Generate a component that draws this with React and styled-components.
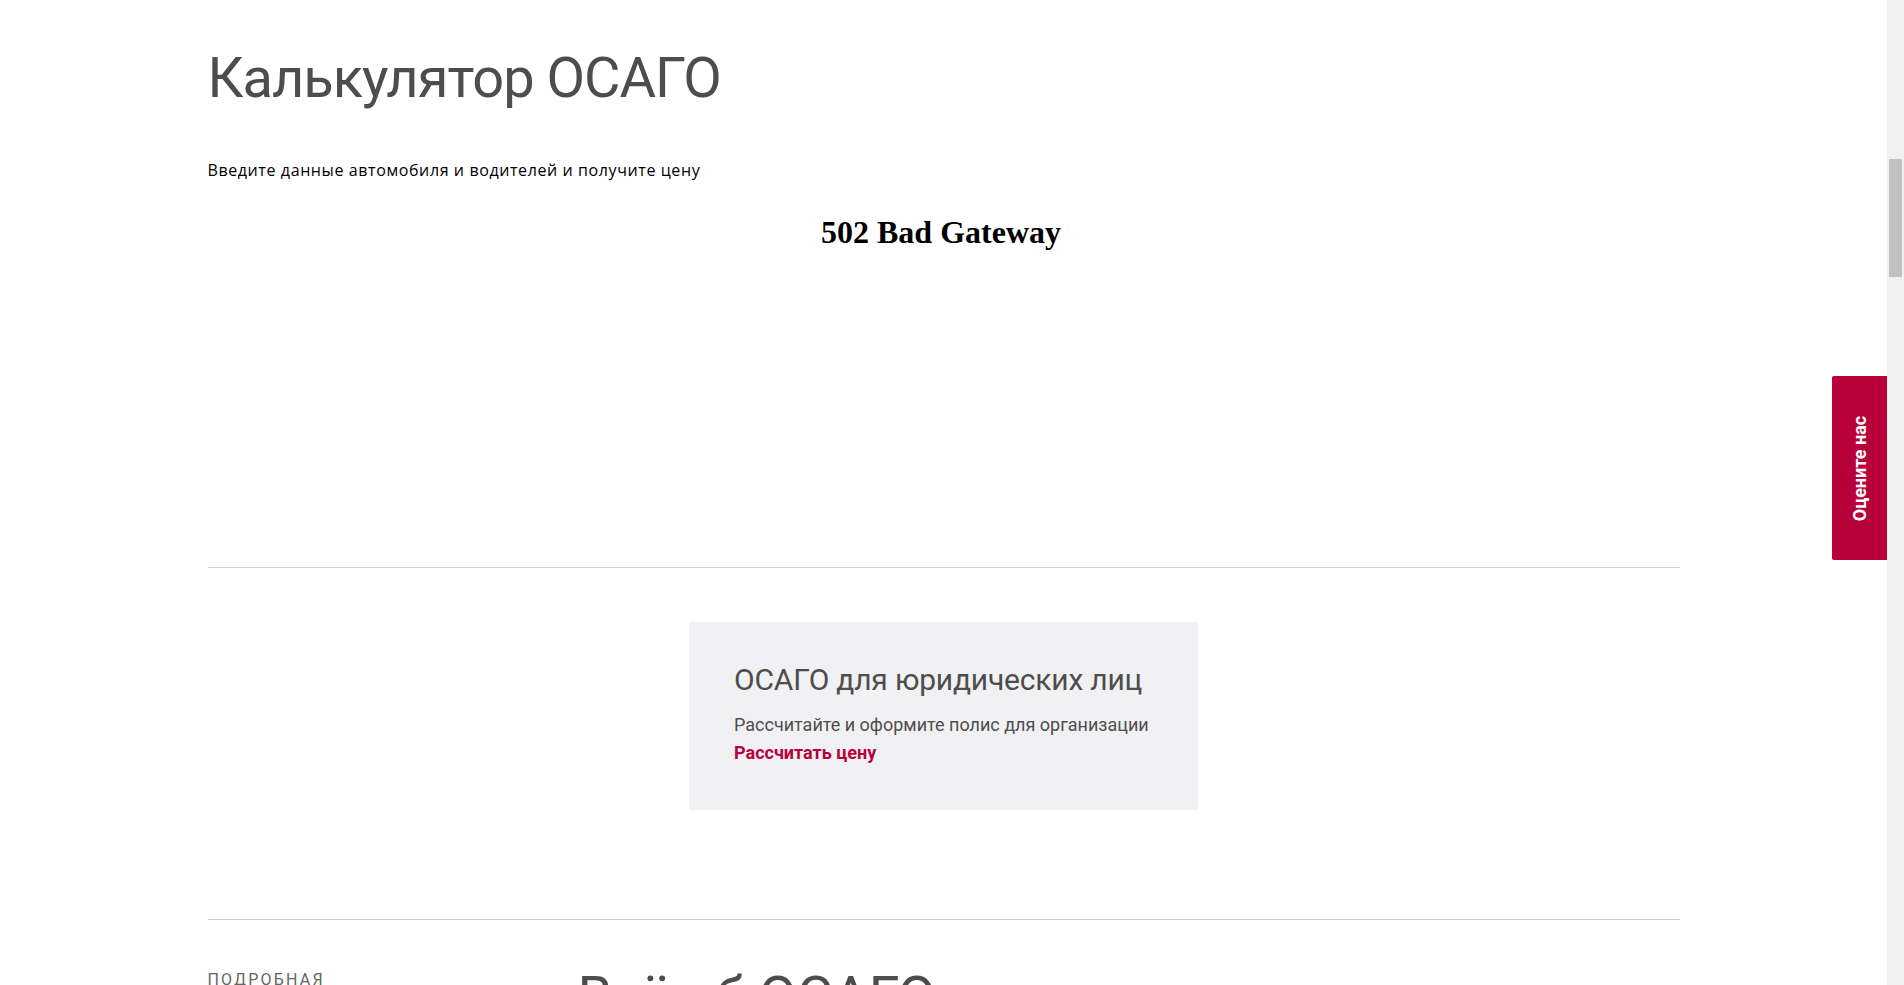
import React from 'react';
import styled, { createGlobalStyle } from 'styled-components';

const GlobalStyle = createGlobalStyle`
    html, body {
        margin: 0;
        padding: 0;
        overflow: hidden;
        background: #ffffff;
    }
`;

const StyledPage = styled.div`
    display: flex;
    flex-direction: row;
    height: 985px;
    overflow: hidden;
`;

const StyledMain = styled.div`
    position: relative;
    flex: 1;
    overflow: hidden;
`;

const StyledContainer = styled.div`
    width: 1472px;
    margin: 0 auto;
    padding-top: 46px;
`;

const StyledTitle = styled.h1`
    margin: 0;
    font-family: Roboto, "Liberation Sans", sans-serif;
    font-size: 56px;
    font-weight: 400;
    line-height: 64px;
    letter-spacing: -1px;
    color: #4d4d4d;
`;

const StyledLead = styled.p`
    margin: 50px 0 0;
    font-family: "Open Sans", "Noto Sans", sans-serif;
    font-size: 16px;
    line-height: 20px;
    letter-spacing: 0.6px;
    color: #000000;
`;

const StyledFrame = styled.div`
    height: 374px;
    padding: 8px 5px 0 0;
    margin-top: 5px;
`;

const StyledError = styled.h2`
    margin: 21px 0 0;
    text-align: center;
    font-family: "Liberation Serif", "Times New Roman", serif;
    font-size: 32px;
    font-weight: 700;
    color: #000000;
`;

const StyledDivide = styled.div`
    border-bottom: 1px solid ${p => p.$tone};
`;

const StyledCardRow = styled.div`
    display: flex;
    justify-content: center;
    padding: 54px 0 109px;
`;

const StyledCard = styled.div`
    width: 509px;
    height: 188px;
    box-sizing: border-box;
    padding: 40px 0 0 45px;
    background: #f1f1f3;
`;

const StyledCardTitle = styled.div`
    font-family: Roboto, "Liberation Sans", sans-serif;
    font-size: 30px;
    line-height: 36px;
    letter-spacing: -0.2px;
    color: #4d4d4d;
`;

const StyledCardText = styled.div`
    margin-top: 13px;
    font-family: Roboto, "Liberation Sans", sans-serif;
    font-size: 18px;
    line-height: 28px;
    color: #4d4d4d;
`;

const StyledCardLink = styled.a`
    display: block;
    font-family: Roboto, "Liberation Sans", sans-serif;
    font-size: 18px;
    font-weight: 700;
    line-height: 28px;
    color: #b8003a;
    text-decoration: none;
`;

const StyledMore = styled.div`
    display: flex;
    flex-direction: row;
    align-items: flex-start;
    padding-top: 45px;
`;

const StyledKicker = styled.div`
    width: 370px;
    margin-top: 6px;
    font-family: Roboto, "Liberation Sans", sans-serif;
    font-size: 16px;
    line-height: 18px;
    letter-spacing: 2.2px;
    color: #666666;
    text-transform: uppercase;
`;

const StyledMoreTitle = styled.div`
    font-family: Roboto, "Liberation Sans", sans-serif;
    font-size: 56px;
    line-height: 64px;
    letter-spacing: -0.5px;
    color: #4d4d4d;
`;

const StyledRateTab = styled.button`
    position: absolute;
    right: 0;
    top: 376px;
    width: 55px;
    height: 184px;
    border: none;
    border-radius: 2px 0 0 2px;
    padding: 0;
    background: #b8003a;
    display: flex;
    align-items: center;
    justify-content: center;
    cursor: pointer;
`;

const StyledRateText = styled.span`
    transform: rotate(-90deg);
    white-space: nowrap;
    font-family: Roboto, "Liberation Sans", sans-serif;
    font-size: 18px;
    font-weight: 700;
    color: #ffffff;
`;

const StyledScrollbar = styled.div`
    width: 17px;
    height: 100%;
    box-sizing: border-box;
    padding: 159px 2px 0;
    background: #f1f1f1;
`;

const StyledThumb = styled.div`
    height: 118px;
    background: #c1c1c1;
`;

function App() {
    return (
        <StyledPage>
            <GlobalStyle />
            <StyledMain>
                <StyledContainer>
                    <StyledTitle>Калькулятор ОСАГО</StyledTitle>
                    <StyledLead>Введите данные автомобиля и водителей и получите цену</StyledLead>
                    <StyledFrame>
                        <StyledError>502 Bad Gateway</StyledError>
                    </StyledFrame>
                    <StyledDivide $tone="#d4d4d8" />
                    <StyledCardRow>
                        <StyledCard>
                            <StyledCardTitle>ОСАГО для юридических лиц</StyledCardTitle>
                            <StyledCardText>Рассчитайте и оформите полис для организации</StyledCardText>
                            <StyledCardLink href="#">Рассчитать цену</StyledCardLink>
                        </StyledCard>
                    </StyledCardRow>
                    <StyledDivide $tone="#c8cdd8" />
                    <StyledMore>
                        <StyledKicker>Подробная</StyledKicker>
                        <StyledMoreTitle>Всё об ОСАГО</StyledMoreTitle>
                    </StyledMore>
                </StyledContainer>
                <StyledRateTab>
                    <StyledRateText>Оцените нас</StyledRateText>
                </StyledRateTab>
            </StyledMain>
            <StyledScrollbar>
                <StyledThumb />
            </StyledScrollbar>
        </StyledPage>
    );
}

export default App;
